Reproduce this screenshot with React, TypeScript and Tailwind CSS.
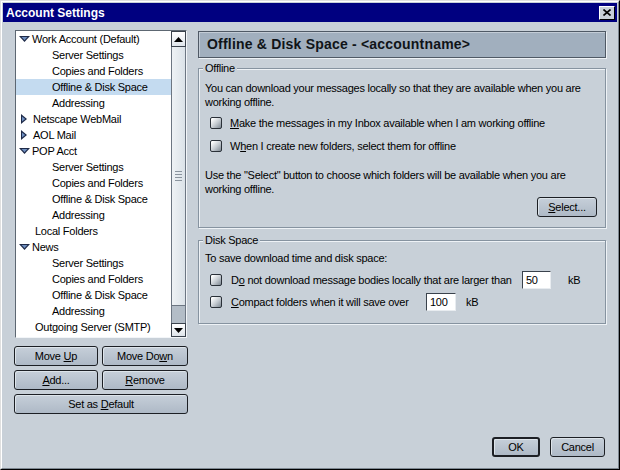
import React from "react";

const F = "font-['Liberation_Sans',Arial,sans-serif]";

function Btn({
  children,
  className = "",
  def = false,
}: {
  children: React.ReactNode;
  className?: string;
  def?: boolean;
}) {
  return (
    <div
      className={`flex h-[20px] items-center justify-center rounded-[3px] ${
        def ? "border-2" : "border"
      } border-[#1c1f24] bg-[linear-gradient(#c6cfd9,#aeb9c6)] text-[11px] text-black shadow-[inset_1px_1px_0_#dde4ea] ${className}`}
    >
      {children}
    </div>
  );
}

function Check() {
  return (
    <div className="h-[12px] w-[12px] shrink-0 rounded-[2px] border border-[#2a3038] bg-[linear-gradient(135deg,#ffffff_10%,#c4cad0_55%,#7e8892)]" />
  );
}

function Down() {
  return (
    <svg width="11" height="6" viewBox="0 0 11 6" className="shrink-0">
      <polygon points="0,0 11,0 5.5,6" fill="#1e2a48" />
      <polygon points="2.5,1 8.5,1 5.5,4.2" fill="#6f8fc0" />
    </svg>
  );
}

function Right() {
  return (
    <svg width="6" height="10" viewBox="0 0 6 10" className="shrink-0">
      <polygon points="0,0 6,5 0,10" fill="#1e2a48" />
      <polygon points="1,2.5 4.2,5 1,7.5" fill="#6f8fc0" />
    </svg>
  );
}

type Row = { t: string; k: "open" | "closed" | "child" | "leaf"; sel?: boolean };

const rows: Row[] = [
  { t: "Work Account (Default)", k: "open" },
  { t: "Server Settings", k: "child" },
  { t: "Copies and Folders", k: "child" },
  { t: "Offline & Disk Space", k: "child", sel: true },
  { t: "Addressing", k: "child" },
  { t: "Netscape WebMail", k: "closed" },
  { t: "AOL Mail", k: "closed" },
  { t: "POP Acct", k: "open" },
  { t: "Server Settings", k: "child" },
  { t: "Copies and Folders", k: "child" },
  { t: "Offline & Disk Space", k: "child" },
  { t: "Addressing", k: "child" },
  { t: "Local Folders", k: "leaf" },
  { t: "News", k: "open" },
  { t: "Server Settings", k: "child" },
  { t: "Copies and Folders", k: "child" },
  { t: "Offline & Disk Space", k: "child" },
  { t: "Addressing", k: "child" },
  { t: "Outgoing Server (SMTP)", k: "leaf" },
];

function TreeRow({ r }: { r: Row }) {
  const base = `flex h-[16px] items-center whitespace-nowrap text-[11px] text-black ${
    r.sel ? "bg-[#c4dbf0]" : ""
  }`;
  if (r.k === "open")
    return (
      <div className={`${base} pl-[3px]`}>
        <Down />
        <span className="ml-[2px]">{r.t}</span>
      </div>
    );
  if (r.k === "closed")
    return (
      <div className={`${base} pl-[5px]`}>
        <Right />
        <span className="ml-[6px]">{r.t}</span>
      </div>
    );
  if (r.k === "child") return <div className={`${base} pl-[36px]`}>{r.t}</div>;
  return <div className={`${base} pl-[19px]`}>{r.t}</div>;
}

function ScrollBtn({ up }: { up?: boolean }) {
  return (
    <div
      className={`flex ${up ? "h-[16px]" : "h-[14px]"} items-center justify-center border border-[#3a424c] bg-[linear-gradient(#ffffff,#dfe5eb)]`}
    >
      <svg width="9" height="5" viewBox="0 0 9 5">
        <polygon points={up ? "0,5 9,5 4.5,0" : "0,0 9,0 4.5,5"} fill="#000" />
      </svg>
    </div>
  );
}

function Group({
  title,
  className,
  children,
}: {
  title: string;
  className: string;
  children: React.ReactNode;
}) {
  return (
    <div
      className={`relative border border-[#8693a0] shadow-[inset_1px_1px_0_#eef2f6,1px_1px_0_#eef2f6] ${className}`}
    >
      <div className="absolute left-[4px] top-[-8px] bg-[#c8d0d8] px-[2px] text-[11px] leading-[14px] text-black">
        {title}
      </div>
      {children}
    </div>
  );
}

export default function App() {
  return (
    <div className={`${F} h-[470px] w-[620px] select-none tracking-[-0.25px]`}>
      <div className="h-full w-full border border-b-[#000] border-l-[#dfdfdf] border-r-[#000] border-t-[#dfdfdf] bg-[#c8d0d8]">
        <div className="flex h-full w-full flex-col border border-b-[#7d8791] border-l-white border-r-[#7d8791] border-t-white p-[1px]">
          {/* title bar */}
          <div className="flex h-[19px] items-center justify-between bg-[#000080] pl-[3px] pr-[2px]">
            <span className="text-[12px] font-bold tracking-normal text-white">Account Settings</span>
            <div className="flex h-[14px] w-[16px] items-center justify-center border border-b-black border-l-white border-r-black border-t-white bg-[#c8d0d8]">
              <svg width="8" height="7" viewBox="0 0 8 7">
                <path d="M0.5 0.5 L7.5 6.5 M7.5 0.5 L0.5 6.5" stroke="#000" strokeWidth="1.6" />
              </svg>
            </div>
          </div>

          {/* body */}
          <div className="flex flex-1 flex-col px-[11px]">
            <div className="mt-[8px] flex gap-[10px]">
              {/* left column */}
              <div className="flex w-[174px] flex-col">
                <div className="ml-[1px] flex h-[308px] w-[172px] border border-b-[#f2f5f8] border-l-[#5d6772] border-r-[#f2f5f8] border-t-[#5d6772] bg-white">
                  <div className="w-[155px] overflow-hidden">
                    {rows.map((r, i) => (
                      <TreeRow key={i} r={r} />
                    ))}
                  </div>
                  <div className="flex w-[15px] flex-col">
                    <ScrollBtn up />
                    <div className="flex h-[258px] items-center justify-center border-x border-[#6c7682] bg-[linear-gradient(90deg,#eef2f5,#dbe2e8)]">
                      <div className="flex flex-col gap-[2px]">
                        <div className="h-px w-[7px] bg-[#8a949e]" />
                        <div className="h-px w-[7px] bg-[#8a949e]" />
                        <div className="h-px w-[7px] bg-[#8a949e]" />
                        <div className="h-px w-[7px] bg-[#8a949e]" />
                      </div>
                    </div>
                    <div className="h-[18px] border-x border-t border-[#6c7682] bg-[#b3bdc7]" />
                    <ScrollBtn />
                  </div>
                </div>
                <div className="mt-[8px] flex gap-[4px]">
                  <Btn className="w-[84px]">
                    <span>
                      Move <u>U</u>p
                    </span>
                  </Btn>
                  <Btn className="w-[86px]">
                    <span>
                      Move Do<u>w</u>n
                    </span>
                  </Btn>
                </div>
                <div className="mt-[4px] flex gap-[4px]">
                  <Btn className="w-[84px]">
                    <span>
                      <u>A</u>dd...
                    </span>
                  </Btn>
                  <Btn className="w-[86px]">
                    <span>
                      <u>R</u>emove
                    </span>
                  </Btn>
                </div>
                <div className="mt-[4px] flex">
                  <Btn className="w-[174px]">
                    <span>
                      Set as <u>D</u>efault
                    </span>
                  </Btn>
                </div>
              </div>

              {/* right column */}
              <div className="flex w-[408px] flex-col">
                <div className="mt-[1px] flex h-[27px] items-center border border-[#4f5965] bg-[#a1afbe] pl-[8px] shadow-[1px_1px_0_#eef2f6,inset_1px_1px_0_#c3ccd6]">
                  <span className="text-[14px] font-bold tracking-[0.2px] text-[#101418]">
                    Offline &amp; Disk Space - &lt;accountname&gt;
                  </span>
                </div>

                <Group title="Offline" className="mt-[10px] h-[160px]">
                  <div className="flex flex-col pl-[6px] pr-[8px] pt-[12px] text-[11px] leading-[14px] text-black">
                    <p>
                      You can download your messages locally so that they are available when you are
                      working offline.
                    </p>
                    <div className="mt-[7px] flex h-[14px] items-center pl-[5px]">
                      <Check />
                      <span className="ml-[8px]">
                        <u>M</u>ake the messages in my Inbox available when I am working offline
                      </span>
                    </div>
                    <div className="mt-[9px] flex h-[14px] items-center pl-[5px]">
                      <Check />
                      <span className="ml-[8px]">
                        W<u>h</u>en I create new folders, select them for offline
                      </span>
                    </div>
                    <p className="mt-[15px]">
                      Use the "Select" button to choose which folders will be available when you are
                      working offline.
                    </p>
                    <div className="mt-[1px] flex justify-end">
                      <Btn className="w-[60px]">
                        <span>
                          <u>S</u>elect...
                        </span>
                      </Btn>
                    </div>
                  </div>
                </Group>

                <Group title="Disk Space" className="mt-[12px] h-[84px]">
                  <div className="flex flex-col pl-[6px] pt-[10px] text-[11px] leading-[14px] text-black">
                    <p>To save download time and disk space:</p>
                    <div className="mt-[6px] flex h-[18px] items-center pl-[5px]">
                      <Check />
                      <span className="ml-[9px] w-[291px] whitespace-nowrap">
                        D<u>o</u> not download message bodies locally that are larger than
                      </span>
                      <div className="flex h-[18px] w-[29px] items-center border border-b-[#e8ecf0] border-l-[#3a424c] border-r-[#e8ecf0] border-t-[#3a424c] bg-white pl-[3px]">
                        50
                      </div>
                      <span className="ml-[17px]">kB</span>
                    </div>
                    <div className="mt-[4px] flex h-[18px] items-center pl-[5px]">
                      <Check />
                      <span className="ml-[9px] w-[195px] whitespace-nowrap">
                        <u>C</u>ompact folders when it will save over
                      </span>
                      <div className="flex h-[18px] w-[30px] items-center border border-b-[#e8ecf0] border-l-[#3a424c] border-r-[#e8ecf0] border-t-[#3a424c] bg-white pl-[3px]">
                        100
                      </div>
                      <span className="ml-[10px]">kB</span>
                    </div>
                  </div>
                </Group>
              </div>
            </div>

            {/* footer */}
            <div className="mb-[10px] mt-auto flex justify-end gap-[10px] pr-[1px]">
              <Btn def className="w-[48px]">
                OK
              </Btn>
              <Btn className="w-[55px]">Cancel</Btn>
            </div>
          </div>
        </div>
      </div>
    </div>
  );
}
